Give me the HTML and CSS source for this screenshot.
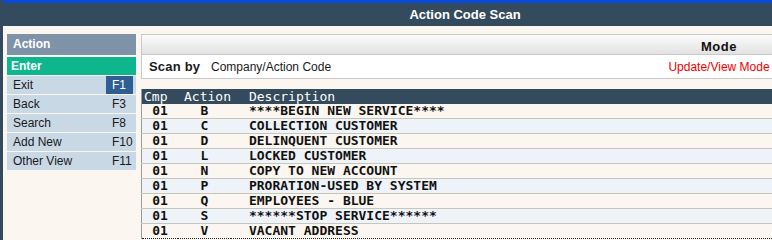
FILE: index.html
```html
<!DOCTYPE html>
<html lang="en">
<head>
	<meta charset="UTF-8">
	<title>Action Code Scan</title>
	<link rel="stylesheet" href="styles.css">
</head>
<body>
	<div class="frame">
		<div class="topbar">
			<div class="title">Action Code Scan</div>
		</div>
		<div class="main">
			<div class="menu">
				<div class="menu-head">Action</div>
				<div class="menu-enter">Enter</div>
				<div class="menu-item"><span class="label">Exit</span><span class="key active">F1</span></div>
				<div class="menu-item"><span class="label">Back</span><span class="key">F3</span></div>
				<div class="menu-item"><span class="label">Search</span><span class="key">F8</span></div>
				<div class="menu-item"><span class="label">Add New</span><span class="key">F10</span></div>
				<div class="menu-item"><span class="label">Other View</span><span class="key">F11</span></div>
			</div>
			<div class="content">
				<div class="scanbox">
					<div class="scan-head">
						<span class="mode-col mode-title">Mode</span>
					</div>
					<div class="scan-row">
						<span class="scan-label">Scan by</span>
						<span class="scan-value">Company/Action Code</span>
						<span class="mode-col mode-value">Update/View Mode</span>
					</div>
				</div>
				<table class="codes">
					<thead>
						<tr><th class="c-cmp">Cmp</th><th class="c-act">Action</th><th class="c-desc">Description</th></tr>
					</thead>
					<tbody>
						<tr><td class="c-cmp">01</td><td class="c-act">B</td><td class="c-desc">****BEGIN NEW SERVICE****</td></tr>
						<tr class="alt"><td class="c-cmp">01</td><td class="c-act">C</td><td class="c-desc">COLLECTION CUSTOMER</td></tr>
						<tr><td class="c-cmp">01</td><td class="c-act">D</td><td class="c-desc">DELINQUENT CUSTOMER</td></tr>
						<tr class="alt"><td class="c-cmp">01</td><td class="c-act">L</td><td class="c-desc">LOCKED CUSTOMER</td></tr>
						<tr><td class="c-cmp">01</td><td class="c-act">N</td><td class="c-desc">COPY TO NEW ACCOUNT</td></tr>
						<tr class="alt"><td class="c-cmp">01</td><td class="c-act">P</td><td class="c-desc">PRORATION-USED BY SYSTEM</td></tr>
						<tr><td class="c-cmp">01</td><td class="c-act">Q</td><td class="c-desc">EMPLOYEES - BLUE</td></tr>
						<tr class="alt"><td class="c-cmp">01</td><td class="c-act">S</td><td class="c-desc">******STOP SERVICE******</td></tr>
						<tr><td class="c-cmp">01</td><td class="c-act">V</td><td class="c-desc">VACANT ADDRESS</td></tr>
					</tbody>
				</table>
			</div>
		</div>
	</div>
</body>
</html>
```

FILE: styles.css
```css
body{
	margin: 0;
	background: #fbf6ef;
	font: 12px 'Liberation Sans', Arial, sans-serif;
	color: #1a1a1a;
	overflow: hidden;
}
.frame{
	border-left: 3px solid #344b5d;
	min-height: 240px;
	box-sizing: border-box;
}
	.topbar{
		border-top: 3px solid #0a4ad8;
		height: 23px;
		background: #344b5d;
		display: flex;
		align-items: center;
		justify-content: center;
		padding-left: 155px;
	}
		.topbar .title{
			color: #fff;
			font: bold 13px 'Liberation Sans', Arial, sans-serif;
		}
	.main{
		display: flex;
		gap: 5px;
		padding: 8px 0 0 4px;
	}

/* left action menu */
.menu{
	width: 129px;
	flex: none;
}
	.menu-head{
		height: 21px;
		margin-bottom: 2px;
		background: #7f93a8;
		color: #fff;
		font-weight: bold;
		line-height: 21px;
		padding-left: 6px;
	}
	.menu-enter{
		height: 18px;
		margin-bottom: 1px;
		background: #0db68c;
		color: #fff;
		font-weight: bold;
		line-height: 18px;
		padding-left: 4px;
	}
	.menu-item{
		display: flex;
		height: 18px;
		margin-bottom: 1px;
		background: #c9d8e5;
		line-height: 18px;
	}
		.menu-item .label{
			flex: 1;
			padding-left: 6px;
		}
		.menu-item .key{
			width: 21px;
			padding-left: 6px;
			margin-right: 3px;
		}
		.menu-item .key.active{
			background: #2f5e93;
			color: #fff;
		}

/* right content */
.content{
	flex: 1;
	margin-right: -6px;
}
	.scanbox{
		border: 1px solid #c9c9c9;
		background: #fff;
	}
		.scan-head{
			display: flex;
			justify-content: flex-end;
			height: 19px;
			background: linear-gradient(#fbfbfb, #e2e2e2);
			border-bottom: 1px solid #c9c9c9;
		}
		.mode-col{
			width: 104px;
			margin-right: 6px;
			text-align: center;
		}
		.mode-title{
			font: bold 13px/19px 'Liberation Sans', Arial, sans-serif;
			letter-spacing: .5px;
			color: #111;
			padding-top: 2px;
		}
		.scan-row{
			display: flex;
			align-items: center;
			height: 23px;
		}
			.scan-label{
				font: bold 13px 'Liberation Sans', Arial, sans-serif;
				letter-spacing: .2px;
				padding-left: 7px;
				width: 62px;
			}
			.scan-value{
				flex: 1;
			}
			.mode-value{
				color: #e00;
			}

	.codes{
		margin-top: 10px;
		width: 100%;
		border-collapse: collapse;
		border-left: 1px solid #9a9a9a;
		border-bottom: 1px dotted #222;
		font: bold 13px 'DejaVu Sans Mono', 'Liberation Mono', monospace;
	}
		.codes th{
			background: #344b5d;
			color: #fff;
			font-weight: normal;
			text-align: left;
			height: 15px;
			padding: 0;
			line-height: 15px;
		}
		.codes td{
			height: 14px;
			padding: 0;
			line-height: 14px;
			border-bottom: 1px solid #c6c6b9;
			color: #111;
		}
		.codes tbody tr:last-child td{
			border-bottom: none;
		}
		.codes tr.alt td{
			background: #eef3fa;
		}
		.codes .c-cmp{
			width: 36px;
		}
		.codes .c-act{
			width: 52px;
		}
		.codes th.c-cmp{
			padding-left: 2px;
			width: 34px;
		}
		.codes th.c-act{
			padding-left: 6px;
			width: 46px;
		}
		.codes td.c-cmp,.codes td.c-act{
			text-align: center;
		}
		.codes .c-desc{
			padding-left: 18px;
		}
```
